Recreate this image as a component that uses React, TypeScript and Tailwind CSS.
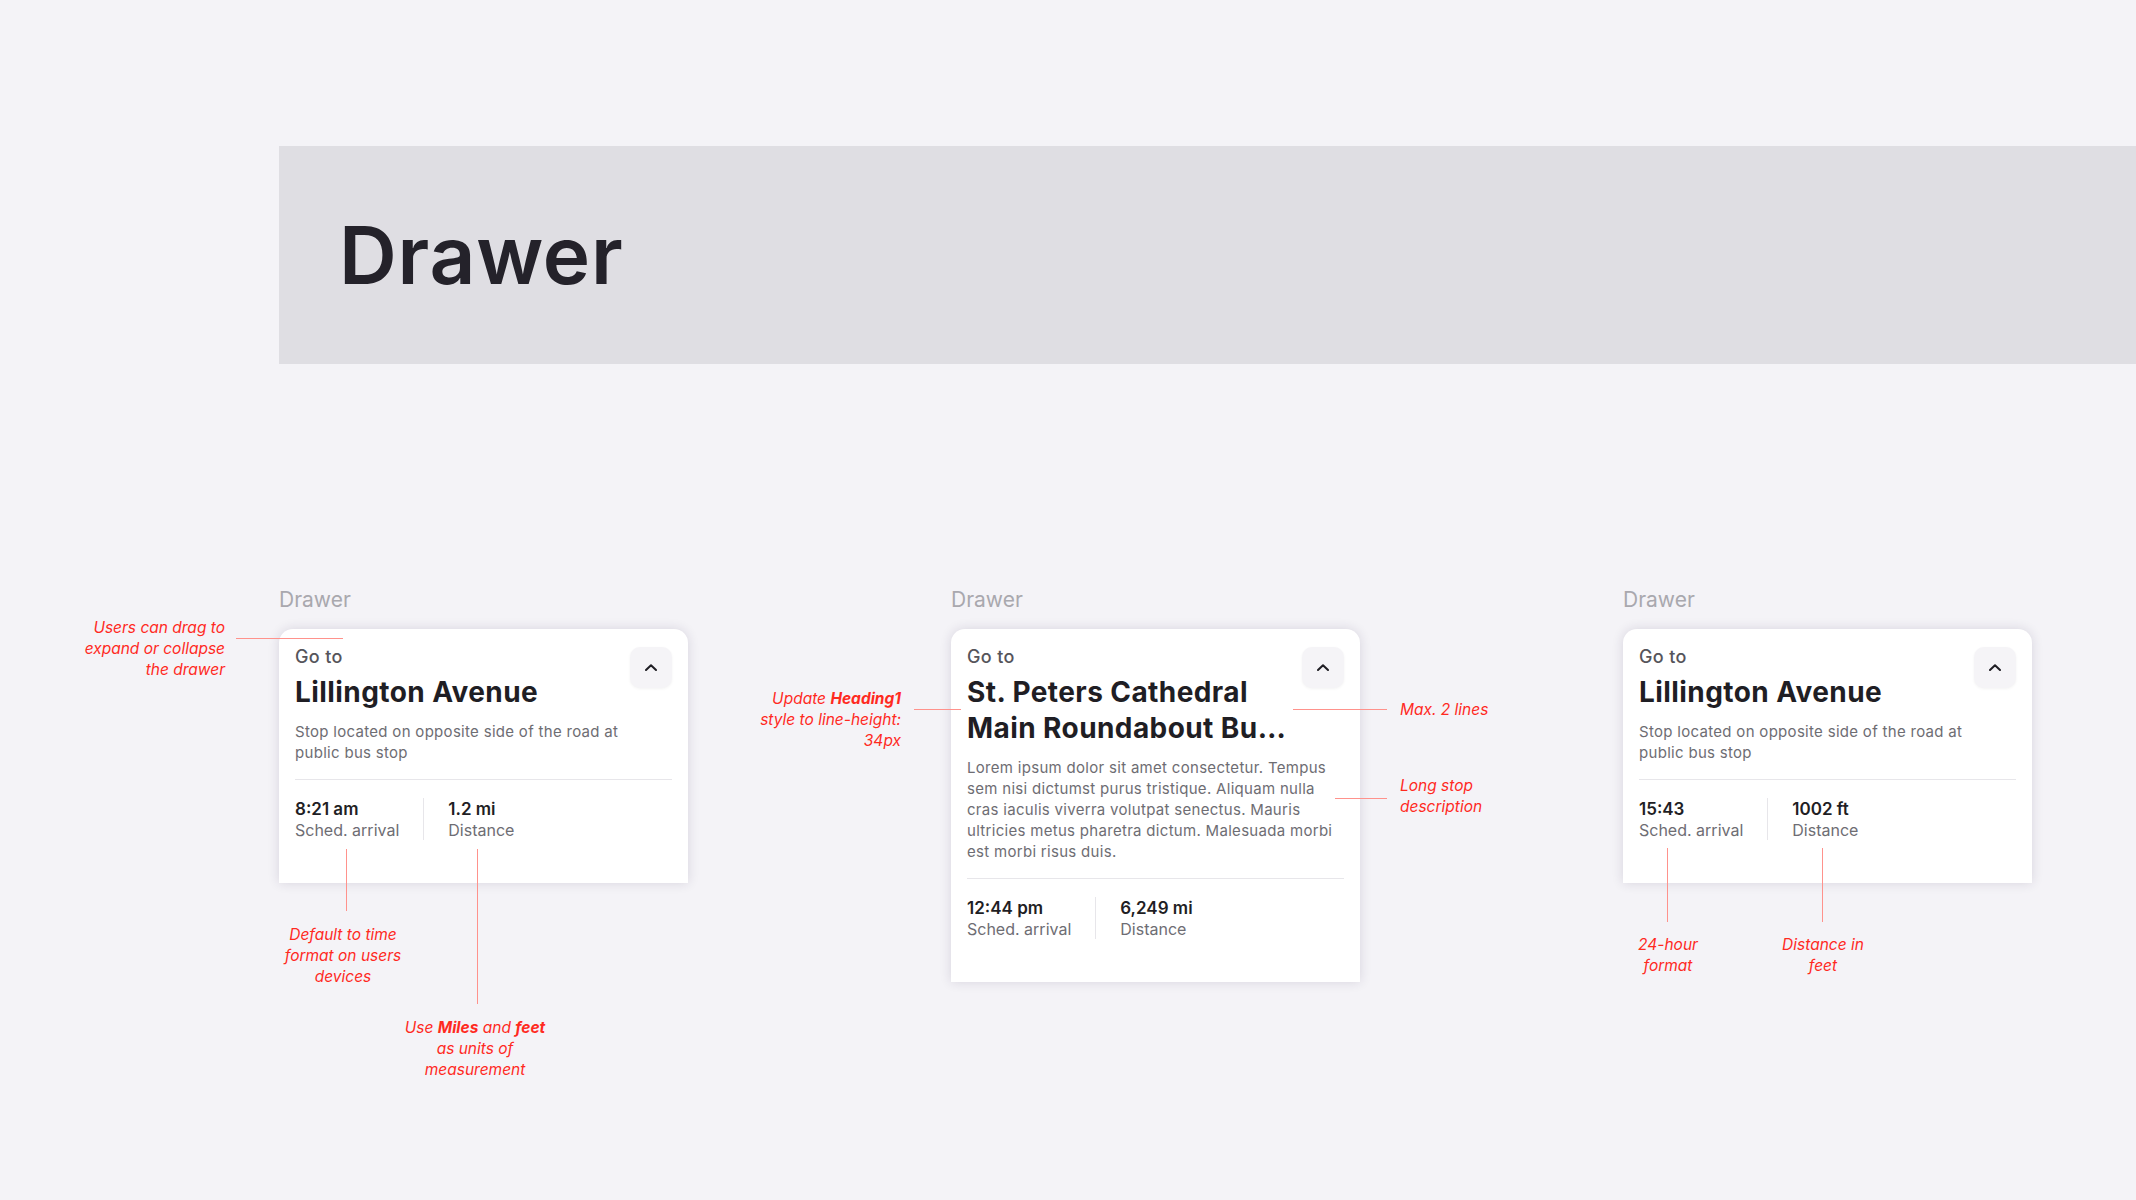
import { FC, ReactNode } from "react";

type Stat = { value: string; label: string };

const ChevronUp: FC = () => (
  <svg width="12" height="7" viewBox="0 0 12 7" fill="none">
    <path
      d="M1 6L6 1.2L11 6"
      stroke="#1f1e24"
      strokeWidth="2"
      strokeLinecap="round"
      strokeLinejoin="round"
    />
  </svg>
);

// red annotation text, positioned around the card
const Note: FC<{ className: string; children: ReactNode }> = ({ className, children }) => (
  <p className={`absolute z-10 text-[15.5px] leading-[21px] italic text-[#ff2a1f] ${className}`}>
    {children}
  </p>
);

const Line: FC<{ className: string }> = ({ className }) => (
  <div className={`absolute z-10 bg-[#ff928c] ${className}`} />
);

const DrawerCard: FC<{
  title: string;
  description: string;
  stats: Stat[];
  children?: ReactNode;
}> = ({ title, description, stats, children }) => (
  <div className="flex flex-col">
    <p className="text-[21px] leading-7 text-[#a9a8ae] mb-[15px]">Drawer</p>
    <div className="relative w-[409px]">
      <div className="bg-white rounded-t-[14px] shadow-[0_0_12px_rgba(40,30,70,0.14)] px-4 pt-4 pb-[43px]">
        <div className="flex items-start gap-2">
          <div className="flex-1 min-w-0">
            <p className="text-[18px] leading-6 font-medium tracking-[0.02em] text-[#56555b]">Go to</p>
            <h2 className="mt-[5px] text-[28px] leading-9 font-bold tracking-[0.015em] text-[#1f1e24] line-clamp-2">
              {title}
            </h2>
          </div>
          <button className="mt-[2px] w-[42px] h-[41px] shrink-0 rounded-[10px] bg-[#f5f4f7] shadow-[0_1px_3px_rgba(0,0,0,0.05)] flex items-center justify-center">
            <ChevronUp />
          </button>
        </div>
        <p className="mt-[11px] pr-2 text-[15px] leading-[21px] tracking-[0.02em] text-[#6e6d73]">
          {description}
        </p>
        <div className="mt-4 border-t border-[#e7e6ea] pt-[18px] flex">
          {stats.map((s, i) => (
            <div
              key={s.label}
              className={i === 0 ? "pr-6 border-r border-[#e7e6ea]" : "pl-6"}
            >
              <p className="text-[17px] leading-[22px] font-semibold text-[#1f1e24]">{s.value}</p>
              <p className="text-[16px] leading-5 text-[#6e6d73]">{s.label}</p>
            </div>
          ))}
        </div>
      </div>
      {children}
    </div>
  </div>
);

export default function App() {
  return (
    <div className="min-h-screen bg-[#f4f3f7] pt-[146px] pb-20 font-['Inter','Noto_Sans',sans-serif]">
      <div className="ml-[279px] h-[218px] bg-[#dfdee3] flex items-center pl-[60px]">
        <h1 className="text-[80px] leading-none font-semibold tracking-[0.01em] text-[#24222a]">
          Drawer
        </h1>
      </div>

      <div className="mt-[222px] ml-[279px] flex items-start gap-[263px]">
        <DrawerCard
          title="Lillington Avenue"
          description="Stop located on opposite side of the road at public bus stop"
          stats={[
            { value: "8:21 am", label: "Sched. arrival" },
            { value: "1.2 mi", label: "Distance" },
          ]}
        >
          <Note className="right-[calc(100%+54px)] top-[-12px] w-[152px] text-right">
            Users can drag to expand or collapse the drawer
          </Note>
          <Line className="left-[-43px] top-[9px] w-[107px] h-px" />
          <Line className="left-[67px] top-[220px] w-px h-[62px]" />
          <Note className="left-[1px] top-[295px] w-[126px] text-center">
            Default to time format on users devices
          </Note>
          <Line className="left-[198px] top-[220px] w-px h-[155px]" />
          <Note className="left-[116px] top-[388px] w-[160px] text-center">
            Use <b>Miles</b> and <b>feet</b> as units of measurement
          </Note>
        </DrawerCard>

        <DrawerCard
          title="St. Peters Cathedral Main Roundabout Bus Stop"
          description="Lorem ipsum dolor sit amet consectetur. Tempus sem nisi dictumst purus tristique. Aliquam nulla cras iaculis viverra volutpat senectus. Mauris ultricies metus pharetra dictum. Malesuada morbi est morbi risus duis."
          stats={[
            { value: "12:44 pm", label: "Sched. arrival" },
            { value: "6,249 mi", label: "Distance" },
          ]}
        >
          <Note className="right-[calc(100%+50px)] top-[59px] w-[156px] text-right">
            Update <b>Heading1</b> style to line-height: 34px
          </Note>
          <Line className="left-[-37px] top-[80px] w-[47px] h-px" />
          <Line className="left-[342px] top-[80px] w-[94px] h-px" />
          <Note className="left-[449px] top-[70px] w-[120px]">Max. 2 lines</Note>
          <Line className="left-[384px] top-[169px] w-[52px] h-px" />
          <Note className="left-[449px] top-[146px] w-[92px]">Long stop description</Note>
        </DrawerCard>

        <DrawerCard
          title="Lillington Avenue"
          description="Stop located on opposite side of the road at public bus stop"
          stats={[
            { value: "15:43", label: "Sched. arrival" },
            { value: "1002 ft", label: "Distance" },
          ]}
        >
          <Line className="left-[44px] top-[219px] w-px h-[74px]" />
          <Note className="left-[7px] top-[305px] w-[76px] text-center">24-hour format</Note>
          <Line className="left-[199px] top-[219px] w-px h-[74px]" />
          <Note className="left-[154px] top-[305px] w-[92px] text-center">Distance in feet</Note>
        </DrawerCard>
      </div>
    </div>
  );
}
